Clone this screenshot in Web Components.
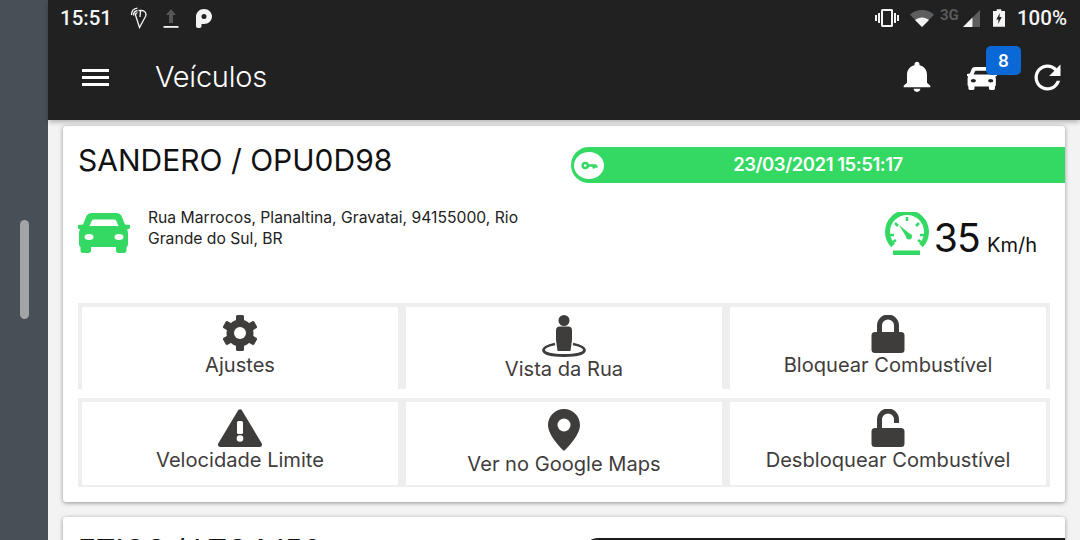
<!DOCTYPE html>
<html lang="pt-BR">
<head>
<meta charset="utf-8">
<title>Veículos</title>
<style>
  html, body { margin: 0; height: 100%; overflow: hidden; }
  body { font-family: "Inter", "Liberation Sans", sans-serif; background: #f3f3f4; }
</style>
</head>
<body>
<app-frame>
  <status-bar></status-bar>
  <app-toolbar heading="Veículos" count="8"></app-toolbar>
  <vehicle-card heading="SANDERO / OPU0D98" stamp="23/03/2021 15:51:17" speed="35">
    <span slot="address">Rua Marrocos, Planaltina, Gravatai, 94155000, Rio Grande do Sul, BR</span>
    <action-tile slot="actions" icon="cog">Ajustes</action-tile>
    <action-tile slot="actions" icon="person">Vista da Rua</action-tile>
    <action-tile slot="actions" icon="lock">Bloquear Combustível</action-tile>
    <action-tile slot="actions" icon="warn" last>Velocidade Limite</action-tile>
    <action-tile slot="actions" icon="pin" last>Ver no Google Maps</action-tile>
    <action-tile slot="actions" icon="unlock" last>Desbloquear Combustível</action-tile>
  </vehicle-card>
  <vehicle-card heading="ETIOS / LTC4J56" off></vehicle-card>
</app-frame>

<script>
(function(){

  const dark = "#3f3c3c";

  const tileIcons = {
    cog: `<svg width="38" height="38" viewBox="0 0 38 38"><g fill="${dark}">
      <circle cx="19" cy="18" r="13.5"/>
      <rect x="15" y="0" width="8" height="36" rx="1.5"/>
      <rect x="15" y="0" width="8" height="36" rx="1.5" transform="rotate(60 19 18)"/>
      <rect x="15" y="0" width="8" height="36" rx="1.5" transform="rotate(120 19 18)"/></g>
      <circle cx="19" cy="18" r="6" fill="#fff"/></svg>`,
    person: `<svg width="44" height="42" viewBox="0 0 44 42">
      <path d="M13 29C6 30.500 1.500 32.300 1.500 35c0 3.500 9 5.500 20.500 5.500S42.500 38.500 42.500 35c0-2.700-4.500-4.500-11.500-6" fill="none" stroke="${dark}" stroke-width="2.800"/>
      <circle cx="22" cy="5.500" r="5.500" fill="${dark}"/>
      <path d="M14 15c0-2 1.500-3.500 3.500-3.500h9c2 0 3.500 1.500 3.500 3.500v10l-1.500 11h-13L14 25z" fill="${dark}"/></svg>`,
    lock: `<svg width="34" height="38" viewBox="0 0 34 38">
      <path d="M8.500 18V10.500a8.500 8.500 0 0 1 17 0V18" fill="none" stroke="${dark}" stroke-width="5"/>
      <rect x="0.500" y="17" width="33" height="21" rx="3.500" fill="${dark}"/></svg>`,
    unlock: `<svg width="34" height="38" viewBox="0 0 34 38">
      <path d="M8.500 20V10.500a8.500 8.500 0 0 1 17 0v3.500" fill="none" stroke="${dark}" stroke-width="5"/>
      <rect x="0.500" y="19" width="33" height="19" rx="3.500" fill="${dark}"/></svg>`,
    warn: `<svg width="44" height="38" viewBox="0 0 44 38">
      <path d="M22 3L2.500 35.500h39z" fill="${dark}" stroke="${dark}" stroke-width="5" stroke-linejoin="round"/>
      <rect x="19" y="12" width="6" height="13" rx="1.500" fill="#fff"/>
      <circle cx="22" cy="29.500" r="3.300" fill="#fff"/></svg>`,
    pin: `<svg width="32" height="42" viewBox="0 0 32 42">
      <path d="M16 0C7.200 0 0 7.100 0 16c0 10.500 13 23 16 26 3-3 16-15.500 16-26C32 7.100 24.800 0 16 0z" fill="${dark}"/>
      <circle cx="16" cy="16" r="6.500" fill="#fff"/></svg>`
  };

  const carBody = "M14 0h24c3 0 5 1.500 6 4l3 7.500 5 .5v3.200l-3 1.600c.8 1.200 1 2.200 1 3.700V31c0 1.500-.5 2.400-1.500 3v3.500c0 1.600-1 2.500-2.500 2.500h-5.500c-1.500 0-2.500-.9-2.500-2.500V34H13v3.500c0 1.600-1 2.500-2.500 2.500H5c-1.500 0-2.500-.9-2.500-2.500V34C1.500 33.400 1 32.500 1 31V20.500c0-1.500.2-2.500 1-3.700L0 15.200V12l5-.5L8 4c1-2.500 3-4 6-4z";

  function carIcon(w, h, body, cut){
    return `<svg width="${w}" height="${h}" viewBox="0 0 52 40">
      <path fill="${body}" d="${carBody}"/>
      <path fill="${cut}" d="M15.500 6.500h21c.8 0 1.300.4 1.600 1.100l2.400 5.400h-29l2.400-5.400c.3-.7.800-1.100 1.600-1.100z"/>
      <ellipse cx="11" cy="24" rx="4.500" ry="3" fill="${cut}"/>
      <ellipse cx="41" cy="24" rx="4.500" ry="3" fill="${cut}"/></svg>`;
  }

  class AppFrame extends HTMLElement {
    constructor(){
      super();
      this.attachShadow({ mode: "open" }).innerHTML = `
      <style>
        :host { display: flex; width: 1080px; height: 540px; overflow: hidden; }
        .rail { flex: 0 0 48px; background: #475057; display: flex; justify-content: center; padding-top: 220px; box-sizing: border-box; }
        .rail i { display: block; width: 9px; height: 99px; border-radius: 5px; background: #a1a5a8; }
        .main { flex: 1; min-width: 0; display: flex; flex-direction: column; }
        .top { flex: none; background: #212121; box-shadow: 0 2px 5px rgba(0,0,0,.28); position: relative; z-index: 1; }
        .content { padding: 6px 15px 0; display: flex; flex-direction: column; gap: 15px; }
      </style>
      <div class="rail"><i></i></div>
      <div class="main">
        <div class="top"><slot name="top"></slot></div>
        <div class="content"><slot></slot></div>
      </div>`;
    }
    connectedCallback(){
      for (const el of this.children) {
        if (el.localName == "status-bar" || el.localName == "app-toolbar") el.slot = "top";
      }
    }
  }

  class StatusBar extends HTMLElement {
    constructor(){
      super();
      this.attachShadow({ mode: "open" }).innerHTML = `
      <style>
        :host { display: flex; align-items: center; height: 36px; padding: 0 13px 0 12px; color: #f4f4f4; font: 500 20.500px "Roboto", sans-serif; box-sizing: border-box; }
        svg { display: block; flex: none; }
        .time { width: 52px; }
        .g { flex: 1; }
        .net { font: 700 15px "Roboto", sans-serif; color: #5b5b5b; margin: -7px 0 0 6px; width: 23px; }
      </style>
      <span class="time">15:51</span>
      <svg style="margin-left:18px" width="18" height="22" viewBox="0 0 18 22" fill="none" stroke="#f4f4f4" stroke-width="1.300">
        <path d="M5 6.500L9.500 20.500 15.500 9.500C17 6 14.500 3.500 11.500 3.500H8.500"/><path d="M10.500 4L10 10"/>
        <path d="M1.500 8C1.500 4 4 1.500 7.500 1.200M3.500 8.500C3.500 6 5 4 7.500 3.500M5.500 8C5.500 7 6 6 7.500 5.500"/></svg>
      <svg style="margin-left:15px" width="16" height="20" viewBox="0 0 16 20">
        <path d="M8 1L3 7H6V15H10V7H13z" fill="#565656"/><rect x="0.500" y="18" width="15" height="1.800" fill="#f4f4f4"/></svg>
      <svg style="margin-left:17px" width="16" height="19" viewBox="0 0 16 19" fill="#f4f4f4">
        <path fill-rule="evenodd" d="M0 8C0 3.500 3.500 0 8 0s8 3.500 8 7.500S12.500 15 8 15H5.500v2c0 1.200-.8 2-2 2H2c-1.200 0-2-.8-2-2zM8 5a2.500 2.500 0 1 0 0 5 2.500 2.500 0 0 0 0-5z"/></svg>
      <span class="g"></span>
      <svg width="24" height="24" viewBox="0 0 24 24" fill="#f4f4f4"><path d="M0 15h2V9H0v6zm3 2h2V7H3v10zm19-8v6h2V9h-2zm-3 8h2V7h-2v10zM16.500 3h-9C6.670 3 6 3.670 6 4.500v15c0 .83.67 1.500 1.500 1.500h9c.83 0 1.500-.67 1.500-1.500v-15c0-.83-.67-1.500-1.500-1.500zM16 19H8V5h8v14z"/></svg>
      <svg style="margin-left:11px" width="24" height="17" viewBox="0 0 24 18" preserveAspectRatio="none">
        <path d="M0 5C3 2 7.500 0 12 0s9 2 12 5L12 18z" fill="#5e5e5e"/><path d="M5 10.500C7 9 9.500 8 12 8s5 1 7 2.500L12 18z" fill="#f4f4f4"/></svg>
      <span class="net">3G</span>
      <svg style="margin-top:1px" width="17" height="17" viewBox="0 0 18 18"><path d="M18 0V18H0z" fill="#5e5e5e"/><path d="M10 8V18H0z" fill="#f4f4f4"/></svg>
      <svg style="margin-left:13px" width="12" height="18" viewBox="0 0 13 19">
        <path d="M4 0h5v2h4v17H0V2h4z" fill="#f4f4f4"/><path d="M7.500 4L3.500 11H6l-.5 5 4-7.500H7z" fill="#212121"/></svg>
      <span style="margin-left:12px">100%</span>`;
    }
  }

  class AppToolbar extends HTMLElement {
    constructor(){
      super();
      this.attachShadow({ mode: "open" }).innerHTML = `
      <style>
        :host { display: flex; align-items: center; height: 84px; padding: 0 19px 0 34px; color: #fff; box-sizing: border-box; }
        svg { display: block; flex: none; }
        .menu { display: flex; flex-direction: column; gap: 4px; width: 27px; margin-top: -1px; }
        .menu i { display: block; height: 3px; background: #fff; }
        h1 { margin: -3px 0 0 46px; flex: 1; font: 300 29px "Inter", sans-serif; letter-spacing: -.25px; }
        .cars { position: relative; margin: 0 30.500px; width: 30px; height: 25px; }
        .badge { position: absolute; left: 19px; top: -20px; width: 35px; height: 29px; border-radius: 5px; background: #0a69d6; font: 500 19px/29px "Roboto", sans-serif; text-align: center; }
      </style>
      <div class="menu"><i></i><i></i><i></i></div>
      <h1></h1>
      <svg width="40" height="37" viewBox="0 0 24 24" preserveAspectRatio="none" fill="#fff" style="margin-top:-3px"><path d="M12 22c1.100 0 2-.9 2-2h-4c0 1.100.89 2 2 2zm6-6v-5c0-3.070-1.640-5.640-4.500-6.320V4c0-.83-.67-1.500-1.500-1.500s-1.500.67-1.500 1.500v.68C7.630 5.360 6 7.920 6 11v5l-2 2v1h16v-1l-2-2z"/></svg>
      <div class="cars">${carIcon(30, 25, "#fff", "#212121")}<span class="badge"></span></div>
      <svg width="39" height="39" viewBox="0 0 24 24" fill="#fff" style="margin:-1px -5.500px 0 0"><path d="M17.650 6.350C16.200 4.900 14.210 4 12 4c-4.420 0-7.990 3.580-7.990 8s3.570 8 7.990 8c3.730 0 6.840-2.550 7.730-6h-2.080c-.82 2.330-3.040 4-5.650 4-3.310 0-6-2.690-6-6s2.690-6 6-6c1.660 0 3.140.69 4.220 1.780L13 11h7V4l-2.350 2.350z"/></svg>`;
    }
    connectedCallback(){
      this.shadowRoot.querySelector("h1").textContent = this.getAttribute("heading");
      this.shadowRoot.querySelector(".badge").textContent = this.getAttribute("count");
    }
  }

  class VehicleCard extends HTMLElement {
    constructor(){
      super();
      this.attachShadow({ mode: "open" }).innerHTML = `
      <style>
        :host { display: block; flex: none; background: #fff; border-radius: 3px; box-shadow: 0 1px 4px rgba(0,0,0,.4); padding: 21px 0 15px 15px; color: #111; }
        svg { display: block; flex: none; }
        .head { display: flex; align-items: center; height: 36px; }
        h2 { flex: 0 0 493px; margin: -10px 0 0; font: 400 30px "Inter", sans-serif; }
        .stamp { flex: 1; height: 36px; display: flex; align-items: center; border-radius: 18px 0 0 18px; background: #34d964; color: #fff; font: 600 18.500px "Inter", sans-serif; letter-spacing: -.45px; }
        :host([off]) h2 { margin-top: -13px; flex-basis: 503px; }
        :host([off]) .stamp { background: #1a1a1a; }
        :host([off]) .info, :host([off]) .grid, :host([off]) .key { display: none; }
        .key { flex: none; width: 30px; height: 27px; margin-left: 3px; border-radius: 50%; background: #fff; display: flex; align-items: center; justify-content: center; }
        .stamp span { flex: 1; text-align: center; padding: 0 33px 2px 0; }
        .info { display: flex; height: 96px; margin-top: 24px; padding-right: 28px; }
        .car { margin-top: 6px; }
        .addr { flex: none; width: 392px; margin-left: 18px; font-size: 15.700px; line-height: 21px; color: #222; }
        .speed { flex: 1; display: flex; justify-content: flex-end; align-items: baseline; height: 45px; margin-top: 5px; }
        .speed svg { align-self: flex-start; margin-right: 5px; }
        .num { font: 400 39px/52px "Inter", sans-serif; letter-spacing: -.8px; }
        .unit { margin-left: 7px; font-size: 20px; }
        .grid { display: grid; grid-template-columns: repeat(3, 1fr); row-gap: 9px; margin-right: 15px; }
      </style>
      <div class="head">
        <h2></h2>
        <div class="stamp">
          <div class="key"><svg width="17" height="11" viewBox="0 0 20 12" fill="none" stroke="#34d964" stroke-width="3"><circle cx="5" cy="6" r="3"/><path d="M8 6h10M15 6v3.500M18 6v2.500"/></svg></div>
          <span class="date"></span>
        </div>
      </div>
      <div class="info">
        <div class="car">${carIcon(52, 40, "#34d964", "#fff")}</div>
        <div class="addr"><slot name="address"></slot></div>
        <div class="speed">
          <svg width="44" height="43" viewBox="0 0 44 43">
            <path d="M8 33.500A19.500 19.500 0 1 1 36 33.500" fill="none" stroke="#34d964" stroke-width="5"/>
            <path d="M14 13L24.500 21.500 21 24.500z" fill="#34d964"/><circle cx="24" cy="24.500" r="3" fill="#34d964"/>
            <path d="M22 5v4M10 11l3 3M5 23h4M34 11l-3 3M39 23h-4M8 30l3-2M36 30l-3-2" stroke="#34d964" stroke-width="2.500"/>
            <rect x="8" y="38.500" width="27" height="4.500" fill="#34d964"/></svg>
          <span class="num"></span><span class="unit">Km/h</span>
        </div>
      </div>
      <div class="grid"><slot name="actions"></slot></div>`;
    }
    connectedCallback(){
      const root = this.shadowRoot;
      root.querySelector("h2").textContent = this.getAttribute("heading");
      root.querySelector(".date").textContent = this.getAttribute("stamp");
      root.querySelector(".num").textContent = this.getAttribute("speed");
    }
  }

  class ActionTile extends HTMLElement {
    constructor(){
      super();
      this.attachShadow({ mode: "open" }).innerHTML = `
      <style>
        :host { display: flex; flex-direction: column; align-items: center; height: 86px; padding-top: 8px; border: solid #eeeeee; border-width: 4px 4px 0; box-sizing: border-box; color: ${dark}; font-size: 20.100px; }
        :host([last]) { height: 89px; padding-top: 7px; border-bottom-width: 2px; }
        :host([last]) .label { margin-top: 1px; }
        svg { display: block; flex: none; }
        .label { line-height: 24px; white-space: nowrap; }
      </style>
      <span class="icon"></span>
      <span class="label"><slot></slot></span>`;
    }
    connectedCallback(){
      this.shadowRoot.querySelector(".icon").innerHTML = tileIcons[this.getAttribute("icon")];
    }
  }

  customElements.define("app-frame", AppFrame);
  customElements.define("status-bar", StatusBar);
  customElements.define("app-toolbar", AppToolbar);
  customElements.define("vehicle-card", VehicleCard);
  customElements.define("action-tile", ActionTile);

})();
</script>
</body>
</html>
